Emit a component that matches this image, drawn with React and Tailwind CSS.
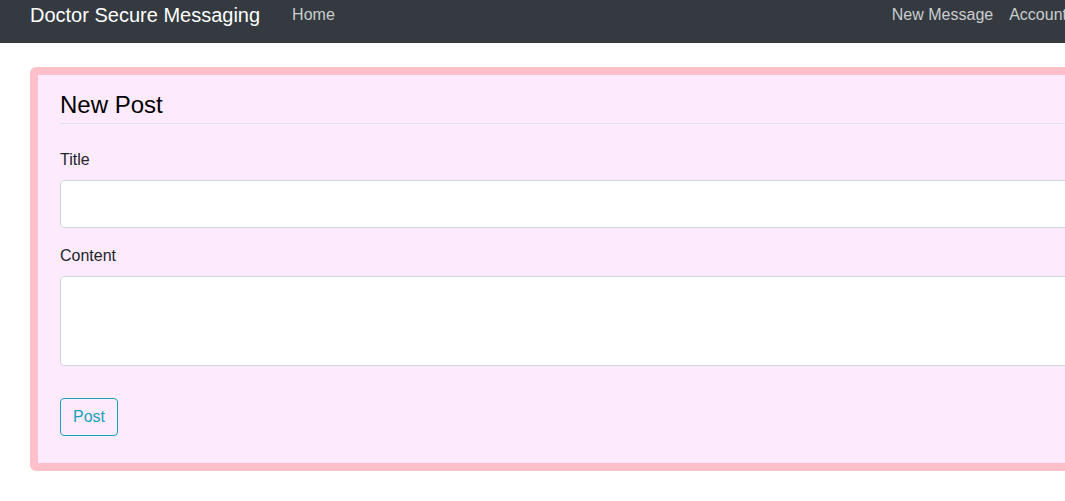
import React from 'react';

const NavBar = () => (
  <nav className="w-[1105px] h-[43px] bg-[#343a40] flex items-start justify-between px-[30px]">
    <div className="flex items-start">
      <span className="text-[20px] leading-[30px] text-white">Doctor Secure Messaging</span>
      <span className="ml-[32px] mt-[3px] text-[16px] leading-[24px] text-white/75">Home</span>
    </div>
    <div className="flex items-start mt-[3px] text-[16px] leading-[24px] text-white/75">
      <span className="px-2">New Message</span>
      <span className="px-2">Account</span>
    </div>
  </nav>
);

const App = () => {
  return (
    <div className="w-[1065px] h-[501px] overflow-hidden bg-white font-['Liberation_Sans',Arial,sans-serif] text-[#212529]">
      <div className="w-[1250px] bg-white">
        <div className="bg-[#343a40]">
          <NavBar />
        </div>

        {/* ── NEW POST CARD ── */}
        <div className="mx-[30px] mt-[24px] rounded-md border-8 border-[#ffc0cb] bg-[#fdebfd] px-[22px] pt-[12px] pb-[27px]">
          <div className="text-[24px] leading-[36px] text-black border-b border-[#dde0e6] mb-[24px]">New Post</div>

          <div className="mb-4">
            <label className="block text-[16px] leading-[24px] mb-2">Title</label>
            <input className="block w-full h-[48px] bg-white border border-[#ced4da] rounded-[4px] px-4 outline-none" />
          </div>

          <div className="mb-4">
            <label className="block text-[16px] leading-[24px] mb-2">Content</label>
            <textarea rows={3} className="block w-full h-[90px] bg-white border border-[#ced4da] rounded-[4px] px-3 py-1.5 resize-none outline-none" />
          </div>

          <div className="pt-4">
            <button className="h-[38px] px-3 border border-[#17a2b8] rounded-[4px] text-[16px] text-[#17a2b8] bg-transparent">Post</button>
          </div>
        </div>
      </div>
    </div>
  );
};

export default App;
